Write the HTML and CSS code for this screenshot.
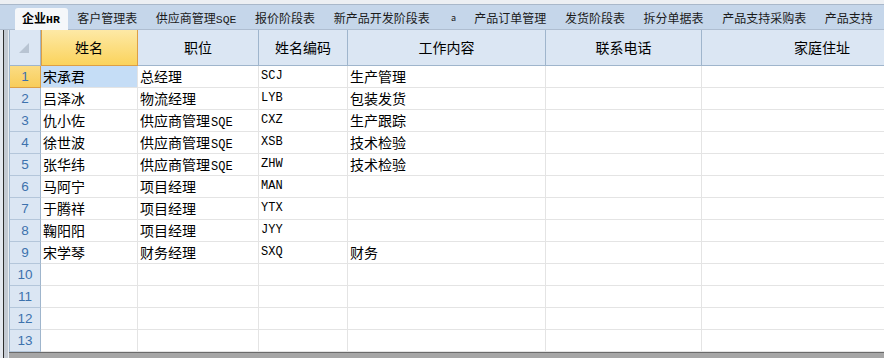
FILE: index.html
```html
<!DOCTYPE html>
<html lang="zh">
<head>
    <meta charset="UTF-8">
    <title>企业HR</title>
    <link rel="stylesheet" href="styles.css">
</head>
<body>
    <div class="tabs">
        <span class="tab active">企业<span class="lat">HR</span></span>
        <span class="tab">客户管理表</span>
        <span class="tab">供应商管理<span class="lat">SQE</span></span>
        <span class="tab">报价阶段表</span>
        <span class="tab">新产品开发阶段表</span>
        <span class="tab tiny">a</span>
        <span class="tab">产品订单管理</span>
        <span class="tab">发货阶段表</span>
        <span class="tab">拆分单据表</span>
        <span class="tab">产品支持采购表</span>
        <span class="tab">产品支持</span>
    </div>
    <div class="main">
        <div class="side"></div>
        <div class="sheet">
            <div class="grid">
                <div class="cell corner"><svg width="30" height="35"><polygon points="9,23 19,23 19,13" fill="#b8c4d2"/></svg></div>
                <div class="cell hd on">姓名</div>
                <div class="cell hd">职位</div>
                <div class="cell hd">姓名编码</div>
                <div class="cell hd">工作内容</div>
                <div class="cell hd">联系电话</div>
                <div class="cell hd">家庭住址</div>

                <div class="cell num on">1</div>
                <div class="cell sel">宋承君</div>
                <div class="cell">总经理</div>
                <div class="cell code">SCJ</div>
                <div class="cell">生产管理</div>
                <div class="cell"></div>
                <div class="cell"></div>

                <div class="cell num">2</div>
                <div class="cell">吕泽冰</div>
                <div class="cell">物流经理</div>
                <div class="cell code">LYB</div>
                <div class="cell">包装发货</div>
                <div class="cell"></div>
                <div class="cell"></div>

                <div class="cell num">3</div>
                <div class="cell">仇小佐</div>
                <div class="cell">供应商管理<span class="code suffix">SQE</span></div>
                <div class="cell code">CXZ</div>
                <div class="cell">生产跟踪</div>
                <div class="cell"></div>
                <div class="cell"></div>

                <div class="cell num">4</div>
                <div class="cell">徐世波</div>
                <div class="cell">供应商管理<span class="code suffix">SQE</span></div>
                <div class="cell code">XSB</div>
                <div class="cell">技术检验</div>
                <div class="cell"></div>
                <div class="cell"></div>

                <div class="cell num">5</div>
                <div class="cell">张华纬</div>
                <div class="cell">供应商管理<span class="code suffix">SQE</span></div>
                <div class="cell code">ZHW</div>
                <div class="cell">技术检验</div>
                <div class="cell"></div>
                <div class="cell"></div>

                <div class="cell num">6</div>
                <div class="cell">马阿宁</div>
                <div class="cell">项目经理</div>
                <div class="cell code">MAN</div>
                <div class="cell"></div>
                <div class="cell"></div>
                <div class="cell"></div>

                <div class="cell num">7</div>
                <div class="cell">于腾祥</div>
                <div class="cell">项目经理</div>
                <div class="cell code">YTX</div>
                <div class="cell"></div>
                <div class="cell"></div>
                <div class="cell"></div>

                <div class="cell num">8</div>
                <div class="cell">鞠阳阳</div>
                <div class="cell">项目经理</div>
                <div class="cell code">JYY</div>
                <div class="cell"></div>
                <div class="cell"></div>
                <div class="cell"></div>

                <div class="cell num">9</div>
                <div class="cell">宋学琴</div>
                <div class="cell">财务经理</div>
                <div class="cell code">SXQ</div>
                <div class="cell">财务</div>
                <div class="cell"></div>
                <div class="cell"></div>

                <div class="cell num">10</div>
                <div class="cell"></div>
                <div class="cell"></div>
                <div class="cell"></div>
                <div class="cell"></div>
                <div class="cell"></div>
                <div class="cell"></div>

                <div class="cell num">11</div>
                <div class="cell"></div>
                <div class="cell"></div>
                <div class="cell"></div>
                <div class="cell"></div>
                <div class="cell"></div>
                <div class="cell"></div>

                <div class="cell num">12</div>
                <div class="cell"></div>
                <div class="cell"></div>
                <div class="cell"></div>
                <div class="cell"></div>
                <div class="cell"></div>
                <div class="cell"></div>

                <div class="cell num">13</div>
                <div class="cell"></div>
                <div class="cell"></div>
                <div class="cell"></div>
                <div class="cell"></div>
                <div class="cell"></div>
                <div class="cell"></div>
            </div>
            <div class="status"></div>
        </div>
    </div>
</body>
</html>
```

FILE: styles.css
```css
body {
    margin: 0;
    width: 884px;
    height: 358px;
    overflow: hidden;
    background-color: #fff;
    font-family: "Noto Sans CJK SC", sans-serif;
}
.tabs {
    height: 30px;
    box-sizing: border-box;
    display: flex;
    align-items: flex-end;
    padding-left: 15px;
    background-color: #c5d6ea;
    border-top: 4px solid #eceff3;
    box-shadow: inset 0 1px #a9b8ca, inset 0 -1px #aebdd0;
    font-size: 12px;
    overflow: hidden;
    white-space: nowrap;
}
.tab {
    height: 22px;
    line-height: 19px;
    padding: 0 9.3px;
    color: #1b1b1b;
}
.tab.active {
    background-color: #f5f7fa;
    border-radius: 3px 3px 0 0;
    padding: 0 8px 0 7px;
    font-weight: bold;
    color: #000;
}
.tab.tiny {
    font-size: 9px;
    padding: 0 9px 0 12px;
}
.lat {
    font-family: "Liberation Mono", monospace;
    font-size: 11.5px;
}
.main {
    display: flex;
    height: 328px;
}
.side {
    width: 9px;
    flex-shrink: 0;
    background: linear-gradient(to right, #e4e8ee 0 3px, #2e2e2e 3px 4px, #c4cad2 4px 8px, #e9edf1 8px 9px);
}
.sheet {
    flex: 1;
    overflow: hidden;
    display: flex;
    flex-direction: column;
}
.grid {
    display: grid;
    grid-template-columns: 31px 97px 121px 89px 198px 156px 241px;
    grid-template-rows: 36px;
    grid-auto-rows: 22px;
    border-left: 1px solid #9fb5cc;
    height: 322px;
}
.cell {
    box-sizing: border-box;
    border-right: 1px solid #e4e4e4;
    border-bottom: 1px solid #e4e4e4;
    padding-left: 2px;
    font-size: 14px;
    line-height: 21px;
    color: #000;
    white-space: nowrap;
    overflow: hidden;
}
.code {
    font-family: "Liberation Mono", monospace;
    font-size: 12px;
}
.suffix {
    margin-left: 1px;
}
.corner {
    background-color: #dbe6f3;
    border-color: #9fb5cc;
    padding: 0;
}
.corner svg {
    display: block;
}
.hd {
    background-color: #dbe6f3;
    border-color: #9fb5cc;
    text-align: center;
    line-height: 35px;
    padding: 0;
}
.hd.on {
    background: linear-gradient(#fde9a6, #fbd35c);
    border-color: #dd9f45;
    box-shadow: inset 1px 0 #dd9f45;
}
.num {
    background-color: #dbe6f3;
    border-right-color: #9fb5cc;
    border-bottom-color: #b4c6da;
    padding: 0;
    text-align: center;
    font-family: "Liberation Sans", sans-serif;
    font-size: 13.5px;
    color: #3d72ad;
}
.num.on {
    background: linear-gradient(#fbdc83, #f8cd5a);
    border-color: #dd9f45;
}
.sel {
    background-color: #c5ddf6;
}
.status {
    height: 6px;
    box-sizing: border-box;
    border-top: 1px solid #6a6a6a;
    background-color: #a6a6a6;
}
```
